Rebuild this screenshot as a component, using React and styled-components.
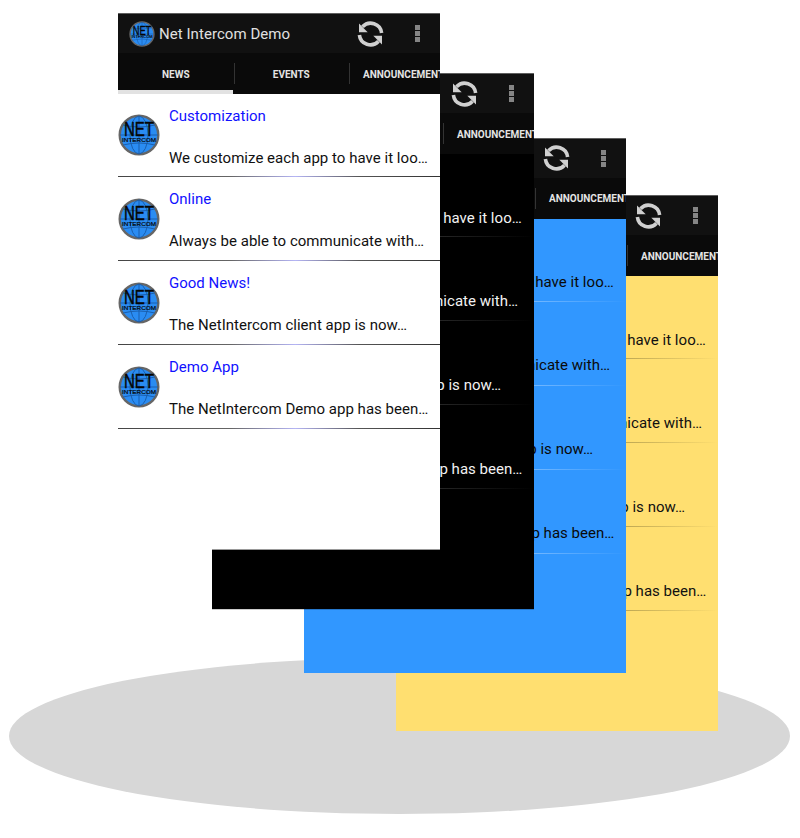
import React from "react";
import styled, { createGlobalStyle } from "styled-components";

const Global = createGlobalStyle`
  html, body { margin: 0; padding: 0; background: #fff; }
  body { font-family: Roboto, "Liberation Sans", sans-serif; }
`;
const Stage = styled.div`
  position: relative;
  width: 800px;
  height: 838px;
  overflow: hidden;
  background: #fff;
`;
const Floor = styled.div`
  position: absolute;
  left: 9px;
  top: 658px;
  width: 781px;
  height: 156px;
  border-radius: 50%;
  background: #d7d7d7;
`;
const Phone = styled.div`
  position: absolute;
  left: ${p => p.$x}px;
  top: ${p => p.$y}px;
  width: 322px;
  height: ${p => p.$h}px;
  display: flex;
  flex-direction: column;
  overflow: hidden;
  background: ${p => p.$bg};
  color: ${p => p.$fg};
  box-shadow: 0 1px 0 ${p => p.$edge};
`;
const Header = styled.div`
  flex: 0 0 40px;
  display: flex;
  align-items: center;
  background: #111;
  border-top: 1px solid #5e5e5e;
  box-sizing: border-box;
  padding-left: 11px;
`;
const AppTitle = styled.div`
  margin-left: 4px;
  font-size: 15px;
  letter-spacing: 0.05px;
  color: #e0e0e0;
  white-space: nowrap;
`;
const Actions = styled.div`
  margin-left: auto;
  display: flex;
  align-items: center;
  gap: 30.5px;
  padding-right: 20.5px;
`;
const Dots = styled.div`
  display: flex;
  flex-direction: column;
  gap: 1px;
  & > i { display: block; width: 5px; height: 5px; background: #858585; }
`;
const Tabs = styled.div`
  flex: 0 0 41px;
  display: flex;
  background: #0a0a0a;
  position: relative;
`;
const Tab = styled.div`
  flex: 0 0 ${p => p.$w}px;
  box-sizing: border-box;
  display: flex;
  align-items: center;
  justify-content: ${p => (p.$left ? "flex-start" : "center")};
  padding-left: ${p => (p.$left ? "14px" : "0")};
  padding-top: 1px;
  font-size: 10px;
  font-weight: 700;
  color: #e4e4e4;
  white-space: nowrap;
  position: relative;
  &:not(:first-child)::before {
    content: "";
    position: absolute;
    left: 0;
    top: 10px;
    height: 21px;
    width: 1px;
    background: #333;
  }
`;
const Indicator = styled.div`
  position: absolute;
  left: 0;
  bottom: 0;
  width: 115px;
  height: 4px;
  background: #e2e2e2;
`;
const List = styled.div`
  display: flex;
  flex-direction: column;
`;
const Row = styled.div`
  height: 84px;
  box-sizing: border-box;
  display: flex;
  align-items: center;
  position: relative;
  &:first-child { height: 83px; }
  &::after {
    content: "";
    position: absolute;
    left: 0;
    right: 0;
    bottom: 0;
    height: 1px;
    background: ${p => p.$line};
  }
`;
const Avatar = styled.div`
  flex: 0 0 42px;
  height: 42px;
  margin-bottom: 1px;
`;
const Copy = styled.div`
  margin-left: 9px;
  flex: 1;
  min-width: 0;
  height: 100%;
  display: flex;
  flex-direction: column;
  box-sizing: border-box;
  padding-top: 12.5px;
`;
const Title = styled.div`
  font-size: 15px;
  line-height: 18px;
  color: #1111ff;
`;
const Body = styled.div`
  margin-top: 24px;
  font-size: 15px;
  line-height: 18px;
  letter-spacing: 0.03px;
  white-space: nowrap;
`;

const Logo = ({ size }) => (
  <svg width={size} height={size} viewBox="0 0 42 42" style={{ display: "block", flex: "none" }}>
    <circle cx="21" cy="21" r="19.3" fill="#2a8cf2" stroke="#666" strokeWidth="2.4" />
    <g fill="none" stroke="#1a5fae" strokeWidth="1">
      <ellipse cx="21" cy="21" rx="9" ry="19" />
      <path d="M21 2V40M2 21H40M5 11Q21 15 37 11M5 31Q21 27 37 31" />
    </g>
    <text x="21" y="22" textAnchor="middle" fontFamily="Liberation Sans, sans-serif" fontSize="20" fontWeight="400" stroke="#050505" strokeWidth="0.5" fill="#050505" textLength="30" lengthAdjust="spacingAndGlyphs">NET</text>
    <text x="21" y="28" textAnchor="middle" fontFamily="Liberation Sans, sans-serif" fontSize="6" fontWeight="400" stroke="#050505" strokeWidth="0.2" fill="#050505" textLength="34" lengthAdjust="spacingAndGlyphs">INTERCOM</text>
  </svg>
);

const Refresh = () => (
  <svg width="27" height="26" viewBox="0 0 27 26" style={{ display: "block" }}>
    <g fill="none" stroke="#d0d0d0" strokeWidth="3.6">
      <path d="M24.6 12A11 11 0 0 0 5.5 5.8" />
      <path d="M2.4 14A11 11 0 0 0 21.5 20.2" />
    </g>
    <path d="M2 2.5V11.2H10.7Z" fill="#d0d0d0" />
    <path d="M25 23.5V14.8H16.3Z" fill="#d0d0d0" />
  </svg>
);

const items = [
  ["Customization", "We customize each app to have it loo…"],
  ["Online", "Always be able to communicate with…"],
  ["Good News!", "The NetIntercom client app is now…"],
  ["Demo App", "The NetIntercom Demo app has been…"],
];

const phones = [
  { x: 396, y: 195, h: 536, bg: "#ffdf70", fg: "#111", edge: "transparent", line: "linear-gradient(90deg,#5a4e22,#8f7f3e 50%,#ffdf70)" },
  { x: 304, y: 137.5, h: 535.5, bg: "#3197ff", fg: "#0a0a0a", edge: "transparent", line: "linear-gradient(90deg,#d5e9ff,#8cc4ff 60%,#3197ff)" },
  { x: 212, y: 73, h: 536, bg: "#000", fg: "#f2f2f2", edge: "rgba(0,0,0,0.2)", line: "linear-gradient(90deg,#555,#333 60%,#000)" },
  { x: 118, y: 13, h: 536, bg: "#fff", fg: "#111", edge: "rgba(255,255,255,0.6)", line: "linear-gradient(90deg,#444,#666 35%,#b5b5f5 55%,#555 75%,#333)" },
];

export default function App() {
  return (
    <Stage>
      <Global />
      <Floor />
      {phones.map(p => (
        <Phone key={p.x} $x={p.x} $y={p.y} $h={p.h} $bg={p.bg} $fg={p.fg} $edge={p.edge}>
          <Header>
            <Logo size={26} />
            <AppTitle>Net Intercom Demo</AppTitle>
            <Actions>
              <Refresh />
              <Dots><i /><i /><i /></Dots>
            </Actions>
          </Header>
          <Tabs>
            <Tab $w={115.5}>NEWS</Tab>
            <Tab $w={115.5}>EVENTS</Tab>
            <Tab $w={115.5} $left>ANNOUNCEMENTS</Tab>
            <Indicator />
          </Tabs>
          <List>
            {items.map(([t, b]) => (
              <Row key={t} $line={p.line}>
                <Avatar><Logo size={42} /></Avatar>
                <Copy>
                  <Title>{t}</Title>
                  <Body>{b}</Body>
                </Copy>
              </Row>
            ))}
          </List>
        </Phone>
      ))}
    </Stage>
  );
}
